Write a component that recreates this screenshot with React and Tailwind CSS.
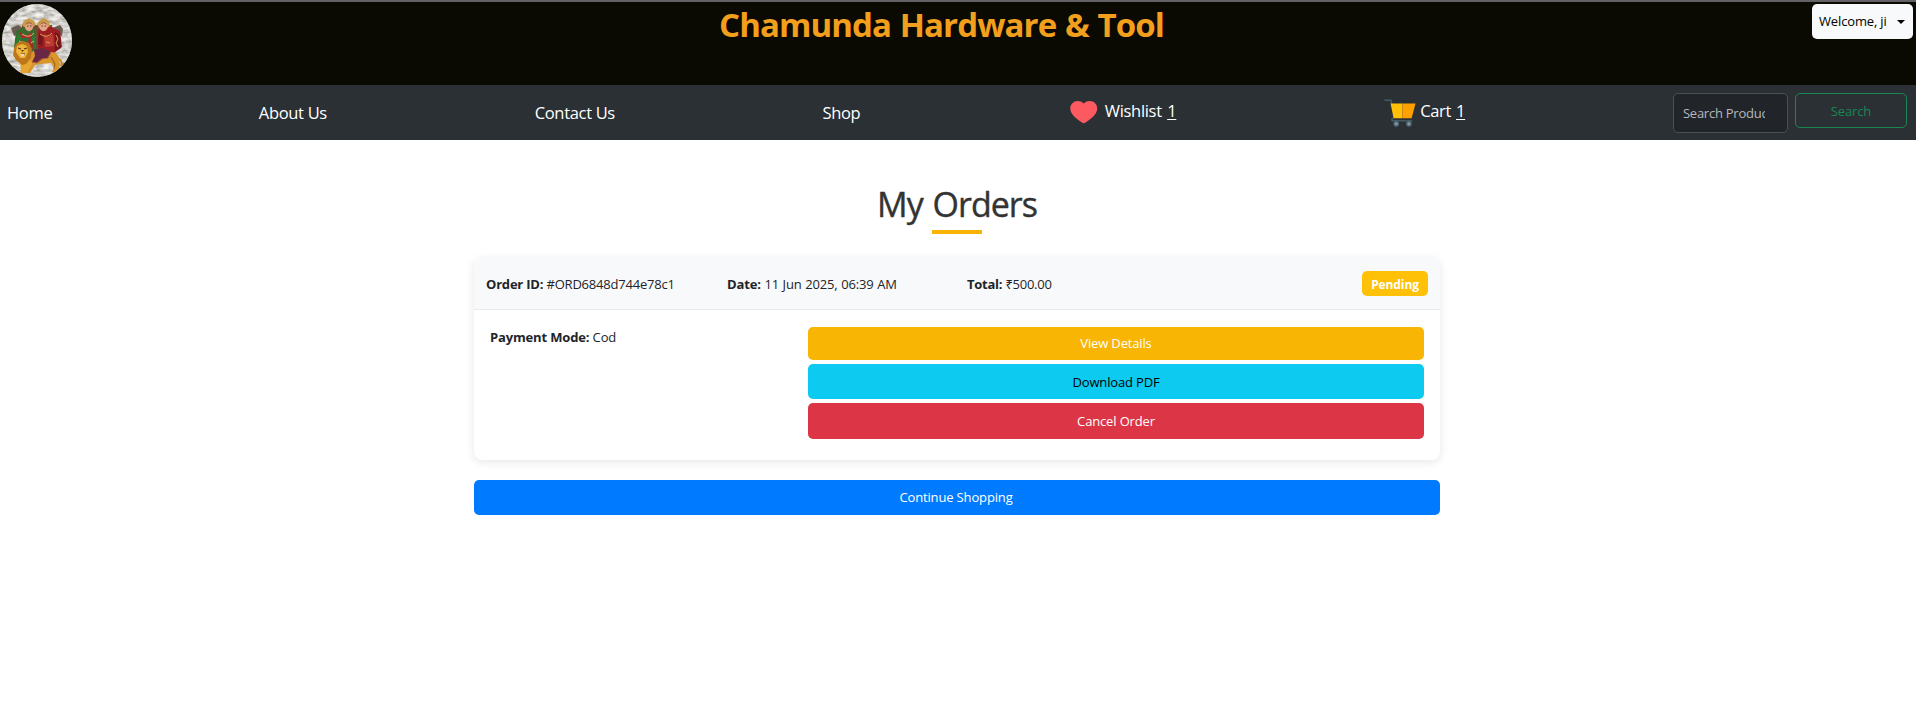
function Logo() {
  return (
    <svg viewBox="0 0 70 73" className="h-[73px] w-[70px]" aria-hidden="true">
      <defs>
        <clipPath id="disc"><ellipse cx="35" cy="36.5" rx="35" ry="36.5" /></clipPath>
        <filter id="stone" x="0" y="0" width="100%" height="100%">
          <feTurbulence type="fractalNoise" baseFrequency="0.12 0.3" numOctaves="3" seed="4" />
          <feColorMatrix values="0.9 0 0 0 0.2  0.9 0 0 0 0.19  0.9 0 0 0 0.16  0 0 0 0 1" />
        </filter>
      </defs>
      <g clipPath="url(#disc)">
        <rect width="70" height="73" fill="#b5b3aa" />
        <rect width="70" height="73" filter="url(#stone)" />
        <path d="M9 24l7-3 5 3v5l-9 3zM50 24l8-3 3 4-1 7-8-3z" fill="#6b5a50" />
        <path d="M20 21h30v27H20z" fill="#6d4a35" />
        {/* left figure */}
        <path d="M14 27l8-4h7l5 4v20l-9 5-13-8z" fill="#3a6a2c" />
        <path d="M18 28l6 4 6-4 1 17-6 4-7-6z" fill="#a62a2c" />
        <path d="M13 41l3-12 4 4-1 12zM29 36l4-8 1 17z" fill="#2f7a33" />
        <path d="M20 34h7l-2 9h-4z" fill="#2f6f38" />
        <path d="M20 21l2-4 5-3 5 3 2 4-3 2h-9z" fill="#c99a45" />
        <ellipse cx="27" cy="22.5" rx="4.2" ry="4.7" fill="#e2a180" />
        <path d="M23 21q4-6 8 0l-4-2z" fill="#8b5e25" />
        <path d="M25 22h1.500M28 22h1.500" stroke="#43251c" strokeWidth=".8" />
        <path d="M20 30q7 5 12-1M17 37l4 2M29 39l3-2" fill="none" stroke="#e0bc65" strokeWidth="1" />
        {/* right figure */}
        <path d="M36 27l7-4h7l8 4 2 16-8 6-16-5z" fill="#9c1e22" />
        <path d="M37 29l4 4-1 9-4-2zM53 28l5 3 1 13-6 3z" fill="#74151d" />
        <path d="M42 30l4 3 5-3 1 12-9 1z" fill="#bd3b34" />
        <path d="M35 20l2-3 5-3 5 3 1 5-3 2h-8z" fill="#c99a45" />
        <ellipse cx="41.5" cy="22.5" rx="4.2" ry="4.7" fill="#e7a486" />
        <path d="M37.500 21q4-6 8 0l-4-2z" fill="#8b5e25" />
        <path d="M39.500 22H41M42.500 22H44" stroke="#43251c" strokeWidth=".8" />
        <path d="M38 30q7 5 12-1M54 31l2 4-2 4 2 4M44 38l4 1" fill="none" stroke="#d7a14f" strokeWidth="1" />
        {/* lion body and legs */}
        <path d="M22 50l10-3 18 1q6 1 7 6l1 6-1 6-4 2h-3l2-4-3-5-10 1-6 1-3 5-2 3h-4l2-6z" fill="#d9962a" />
        <path d="M17 52h11l2 8-5 9h-7l1-4z" fill="#e7a62f" />
        <path d="M49 53l4 7-1 5" fill="none" stroke="#a2661c" strokeWidth="1.200" />
        <path d="M57 55q4 3 2 7l3-3" fill="none" stroke="#c98324" strokeWidth="1.800" />
        {/* mane and face */}
        <path d="M12 44l3-5 6-2 6 2 3 6-1 9-5 6-4 1-6-5-3-5z" fill="#bd7618" />
        <path d="M15 42l5-2 5 2 1 6-3 6h-5l-4-6z" fill="#edb53c" />
        <path d="M16 44l3 1M22 45l3-1M19 50h4" stroke="#573111" strokeWidth="1.100" />
        <path d="M19 46h3l-1.500 2z" fill="#73391a" />
        <path d="M18.500 50h4l-1 2.500h-2z" fill="#e9d8b0" />
        {/* saddle cloth */}
        <path d="M32 46l9-2 8 4-3 6-6 1-5 4-5-1 3-6z" fill="#682744" />
        <path d="M30 58l5 1 5-4 6-1 3-6" fill="none" stroke="#b0603b" strokeWidth="1.100" />
      </g>
    </svg>
  );
}

function Heart() {
  return (
    <svg viewBox="0 0 29 24" className="mt-[3px] h-6 w-[29px]" aria-hidden="true">
      <path d="M14.500 3.100C12.700 1 10.600.3 8.200.3 3.700.3.300 3.800.300 8.300c0 6.700 7.200 11 12.300 14.800 1.300.9 2.500.9 3.800 0 5.100-3.800 12.300-8.100 12.300-14.800 0-4.500-3.400-8-7.900-8-2.400 0-4.500.7-6.300 2.800z" fill="#fc5a60" />
    </svg>
  );
}

function CartIcon() {
  return (
    <svg viewBox="0 0 34 30" className="mt-px h-[30px] w-[34px]" aria-hidden="true">
      <path d="M.5 1.500h7l.8 4M10 20l-1.500 1.500q-.8 1.800 1.500 1.800h20" fill="none" stroke="#455a64" strokeWidth="1.700" />
      <path d="M7 5h12.500v15.500h-9.300z" fill="#ffc107" />
      <path d="M19.500 5H33.500l-4.200 15.500h-9.800z" fill="#ffa000" />
      <circle cx="13" cy="26.500" r="2.200" fill="#8a9ba3" stroke="#546e7a" strokeWidth="1.600" />
      <circle cx="26.500" cy="26.500" r="2.200" fill="#8a9ba3" stroke="#546e7a" strokeWidth="1.600" />
    </svg>
  );
}

function Header() {
  return (
    <header className="grid h-[85px] grid-cols-[719px_1fr_104px] items-start border-t-2 border-[#626166] bg-[#0a0a02]">
      <div className="pt-0.5 pl-0.5"><Logo /></div>
      <h1 className="pt-px text-[33px] leading-[44px] font-bold tracking-[-0.9px] [word-spacing:1px] whitespace-nowrap text-[#f29f1d]">Chamunda Hardware &amp; Tool</h1>
      <button className="mt-0.5 flex h-[35px] w-[101px] items-center gap-[10px] rounded-[5px] bg-[#f8f9fa] pl-[7px] text-[13px] tracking-[-0.15px] whitespace-nowrap text-black">
        <span className="w-[68px] text-left">Welcome, ji</span>
        <span className="border-x-4 border-t-4 border-x-transparent border-t-black" />
      </button>
    </header>
  );
}

function Nav() {
  return (
    <nav className="flex h-[55px] items-center justify-between bg-[#2b3035] pr-[9px] pl-[7px] text-[16.5px] leading-6 tracking-[-0.32px] whitespace-nowrap text-white">
      <a className="w-11">Home</a>
      <a className="w-[68px]">About Us</a>
      <a className="w-20">Contact Us</a>
      <a className="w-10">Shop</a>
      <a className="flex h-[31px] w-[106px] items-start [word-spacing:1.5px]">
        <Heart />
        <span className="ml-[7px] pt-0.5">Wishlist <span className="underline underline-offset-2">1</span></span>
      </a>
      <a className="flex h-[31px] w-[81px] items-start [word-spacing:1px]">
        <CartIcon />
        <span className="ml-1 pt-0.5">Cart <span className="underline underline-offset-2">1</span></span>
      </a>
      <form className="flex items-start gap-[7px] text-[13px] tracking-[-0.15px]">
        <input
          className="h-10 w-[115px] rounded-[5px] border border-[#495057] bg-[#212529] pr-[22px] pl-[9px] tracking-[-0.25px] placeholder:text-[#b5b8ba]"
          placeholder="Search Product"
        />
        <button type="button" className="h-[35px] w-28 rounded-[5px] border border-[#198754] pt-px text-[#198754]">Search</button>
      </form>
    </nav>
  );
}

function OrderCard() {
  return (
    <section className="h-[202px] overflow-hidden rounded-lg bg-white shadow-[0_2px_10px_rgba(0,0,0,0.1)]">
      <div className="grid h-[52px] grid-cols-[240px_240px_1fr_66px] items-center border-b border-[#e9ebed] bg-[#f8f9fa] px-3">
        <p className="pt-[2px] tracking-[-0.2px]"><b>Order ID:</b> #ORD6848d744e78c1</p>
        <p className="pt-[2px] pl-px [word-spacing:0.4px]"><b>Date:</b> 11 Jun 2025, 06:39 AM</p>
        <p className="pt-[2px] pl-px tracking-[-0.25px]"><b>Total:</b> ₹500.00</p>
        <span className="h-[25px] rounded-[5px] bg-[#ffc107] pt-[2px] text-center text-[12px] leading-[23px] font-bold tracking-[-0.1px] text-white">Pending</span>
      </div>
      <div className="grid grid-cols-[318px_1fr] pt-[17px] pr-4 pl-4">
        <p className="pt-px leading-[18px]"><b>Payment Mode:</b> Cod</p>
        <div className="flex flex-col gap-1 text-white">
          <button className="h-[33px] rounded-[5px] bg-[#f9b503]">View Details</button>
          <button className="h-[35px] rounded-[5px] bg-[#0dcaf0] pt-[2px] text-black">Download PDF</button>
          <button className="h-9 rounded-[5px] bg-[#dc3545] pt-px">Cancel Order</button>
        </div>
      </div>
    </section>
  );
}

export default function App() {
  return (
    <div className="min-h-[724px] bg-white font-['Open_Sans','Noto_Sans',sans-serif] text-[#212529]">
      <Header />
      <Nav />
      <main className="ml-[474px] w-[966px] pt-[43px] text-[13px] tracking-[-0.15px] whitespace-nowrap">
        <div className="mb-6 flex flex-col items-center">
          <h2 className="h-[47px] text-[34px] leading-[42px] font-medium tracking-[-1px] [word-spacing:2px] text-[#333] [-webkit-text-stroke:0.4px_#333]">My Orders</h2>
          <div className="h-1 w-[50px] bg-[#fbb403]" />
        </div>
        <OrderCard />
        <button className="mt-5 h-[35px] w-full rounded-[5px] bg-[#007bff] pr-0.5 text-white">Continue Shopping</button>
      </main>
    </div>
  );
}
